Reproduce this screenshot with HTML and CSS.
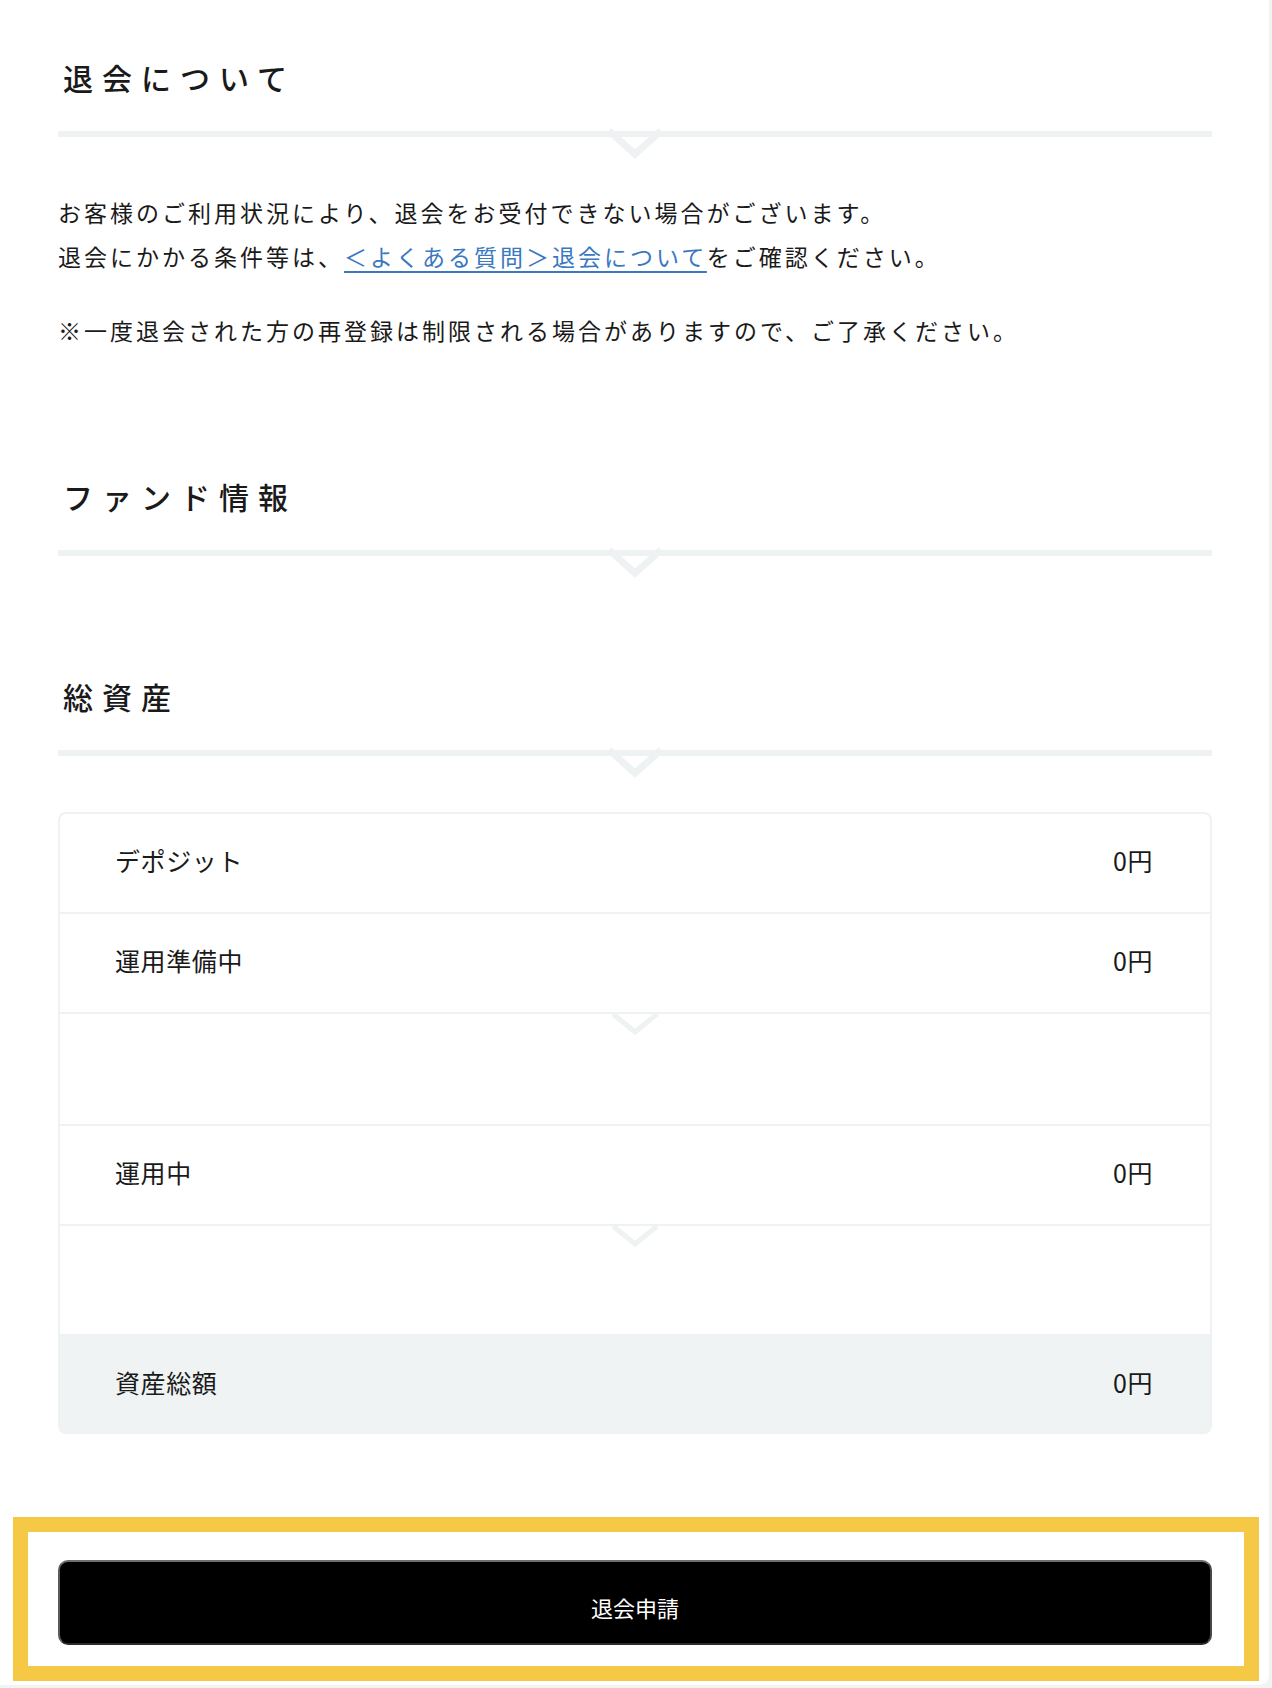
FILE: index.html
```html
<!DOCTYPE html>
<html lang="ja">
<head>
<meta charset="UTF-8">
<meta name="viewport" content="width=device-width, initial-scale=1.0">
<title>退会について</title>
<link rel="stylesheet" href="styles.css">
</head>
<body>
<div class="page">
    <section class="section">
        <h2 class="title">退会について</h2>
        <div class="rule">
            <svg class="rule-arrow" width="60" height="36" viewBox="0 0 60 36"><polyline points="4,4 30,27 56,4" fill="none" stroke="#eef2f2" stroke-width="7"/></svg>
        </div>
        <p class="lead">お客様のご利用状況により、退会をお受付できない場合がございます。<br>退会にかかる条件等は、<a href="#" class="link">＜よくある質問＞退会について</a>をご確認ください。</p>
        <p class="note">※一度退会された方の再登録は制限される場合がありますので、ご了承ください。</p>
    </section>

    <section class="section fund">
        <h2 class="title">ファンド情報</h2>
        <div class="rule">
            <svg class="rule-arrow" width="60" height="36" viewBox="0 0 60 36"><polyline points="4,4 30,27 56,4" fill="none" stroke="#eef2f2" stroke-width="7"/></svg>
        </div>
    </section>

    <section class="section assets">
        <h2 class="title">総資産</h2>
        <div class="rule">
            <svg class="rule-arrow" width="60" height="36" viewBox="0 0 60 36"><polyline points="4,4 30,27 56,4" fill="none" stroke="#eef2f2" stroke-width="7"/></svg>
        </div>

        <div class="card">
            <div class="row"><span>デポジット</span><span>0円</span></div>
            <div class="row"><span>運用準備中</span><span>0円</span></div>
            <div class="spacer">
                <svg class="step-arrow" width="50" height="26" viewBox="0 0 50 26"><polyline points="3,0 25,18 47,0" fill="none" stroke="#eef2f2" stroke-width="5"/></svg>
            </div>
            <div class="row"><span>運用中</span><span>0円</span></div>
            <div class="spacer short">
                <svg class="step-arrow" width="50" height="26" viewBox="0 0 50 26"><polyline points="3,0 25,18 47,0" fill="none" stroke="#eef2f2" stroke-width="5"/></svg>
            </div>
            <div class="row total"><span>資産総額</span><span>0円</span></div>
        </div>
    </section>

    <div class="highlight">
        <button class="submit">退会申請</button>
    </div>
</div>
</body>
</html>
```

FILE: styles.css
```css
body {
    margin: 0;
    background-color: #f2f4f4;
    font-family: "Noto Sans CJK JP", "Noto Sans", sans-serif;
    color: #1a1a1a;
}
.page {
    width: 1269px;
    box-sizing: border-box;
    padding: 57px 57px 4px 58px;
    background-color: #fff;
    border-radius: 0 0 10px 0;
}
.section {
    margin: 0;
}
.fund {
    margin-top: 124px;
}
.assets {
    margin-top: 120px;
}
.title {
    margin: 0;
    padding-left: 5px;
    font-size: 30px;
    line-height: 40px;
    font-weight: 500;
    letter-spacing: 9px;
}
.rule {
    position: relative;
    height: 6px;
    margin-top: 34px;
    background-color: #eef2f2;
}
.rule-arrow {
    position: absolute;
    left: 50%;
    top: -4px;
    margin-left: -30px;
}
.lead,
.note {
    margin: 0;
    font-size: 23px;
    line-height: 44px;
    letter-spacing: 3px;
}
.lead {
    margin-top: 53px;
}
.note {
    margin-top: 30px;
}
.link {
    color: #3b78c2;
    text-decoration: underline;
    text-underline-offset: 5px;
    text-decoration-thickness: 2px;
}
.card {
    margin-top: 56px;
    border: 2px solid #eef2f2;
    border-radius: 8px;
    overflow: hidden;
}
.row {
    display: flex;
    justify-content: space-between;
    align-items: center;
    height: 100px;
    box-sizing: border-box;
    padding: 0 57px 6px 55px;
    border-bottom: 2px solid #eef2f2;
    font-size: 25px;
    letter-spacing: 0.6px;
}
.spacer {
    position: relative;
    height: 110px;
    border-bottom: 2px solid #eef2f2;
}
.spacer.short {
    height: 108px;
}
.step-arrow {
    position: absolute;
    left: 50%;
    top: 0;
    margin-left: -25px;
}
.total {
    height: 96px;
    padding-bottom: 4px;
    border-bottom: none;
    background-color: #f0f3f3;
}
.highlight {
    margin: 83px -47px 0 -45px;
    padding: 28px 32px 21px 30px;
    border: 15px solid #f5c945;
}
.submit {
    display: block;
    width: 100%;
    height: 85px;
    padding: 8px 0 0;
    background-color: #000;
    color: #fff;
    border: 2px solid;
    border-color: #6e6e6e #474747 #2a2a2a #5a5a5a;
    border-radius: 10px;
    font-family: "Noto Sans CJK JP", "Noto Sans", sans-serif;
    font-size: 22px;
    cursor: pointer;
}
```
